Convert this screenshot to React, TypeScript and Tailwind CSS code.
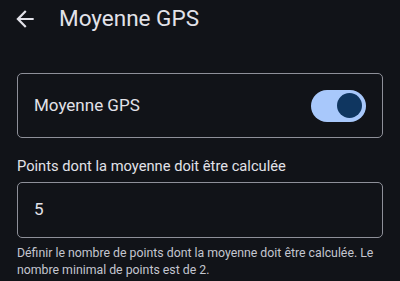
import React from "react";

export default function App() {
  return (
    <div className="w-[400px] h-[281px] overflow-hidden bg-[#111318] text-[#e2e2e9]" style={{ fontFamily: "Roboto, 'Noto Sans', sans-serif" }}>
      <div className="flex items-center h-[37px] pl-[12px]">
        <svg width="26" height="26" viewBox="0 0 24 24" className="text-[#e2e2e9]">
          <path d="M20 11H7.83l5.59-5.59L12 4l-8 8 8 8 1.41-1.41L7.83 13H20v-2z" fill="currentColor" />
        </svg>
        <span className="ml-[21px] text-[22.5px] leading-none">Moyenne GPS</span>
      </div>
      <div className="mx-[17px] mt-[36px] h-[65px] border border-[#8e9099] rounded-[5px] flex items-center justify-between pl-[16px] pr-[16px]">
        <span className="text-[17px]">Moyenne GPS</span>
        <div className="w-[55px] h-[32px] rounded-full bg-[#a8c8fb] flex items-center justify-end pr-[4px]">
          <div className="w-[25px] h-[25px] rounded-full bg-[#0f3660]" />
        </div>
      </div>
      <div className="mx-[17px] mt-[18px] text-[14.7px] leading-[20px]">Points dont la moyenne doit être calculée</div>
      <div className="mx-[17px] mt-[6px] h-[56px] border border-[#8e9099] rounded-[5px] flex items-center pl-[16px] text-[17px]">
        5
      </div>
      <div className="mx-[17px] mt-[7px] text-[12.3px] leading-[17px] text-[#c4c6d0]">
        Définir le nombre de points dont la moyenne doit être calculée. Le nombre minimal de points est de 2.
      </div>
    </div>
  );
}
